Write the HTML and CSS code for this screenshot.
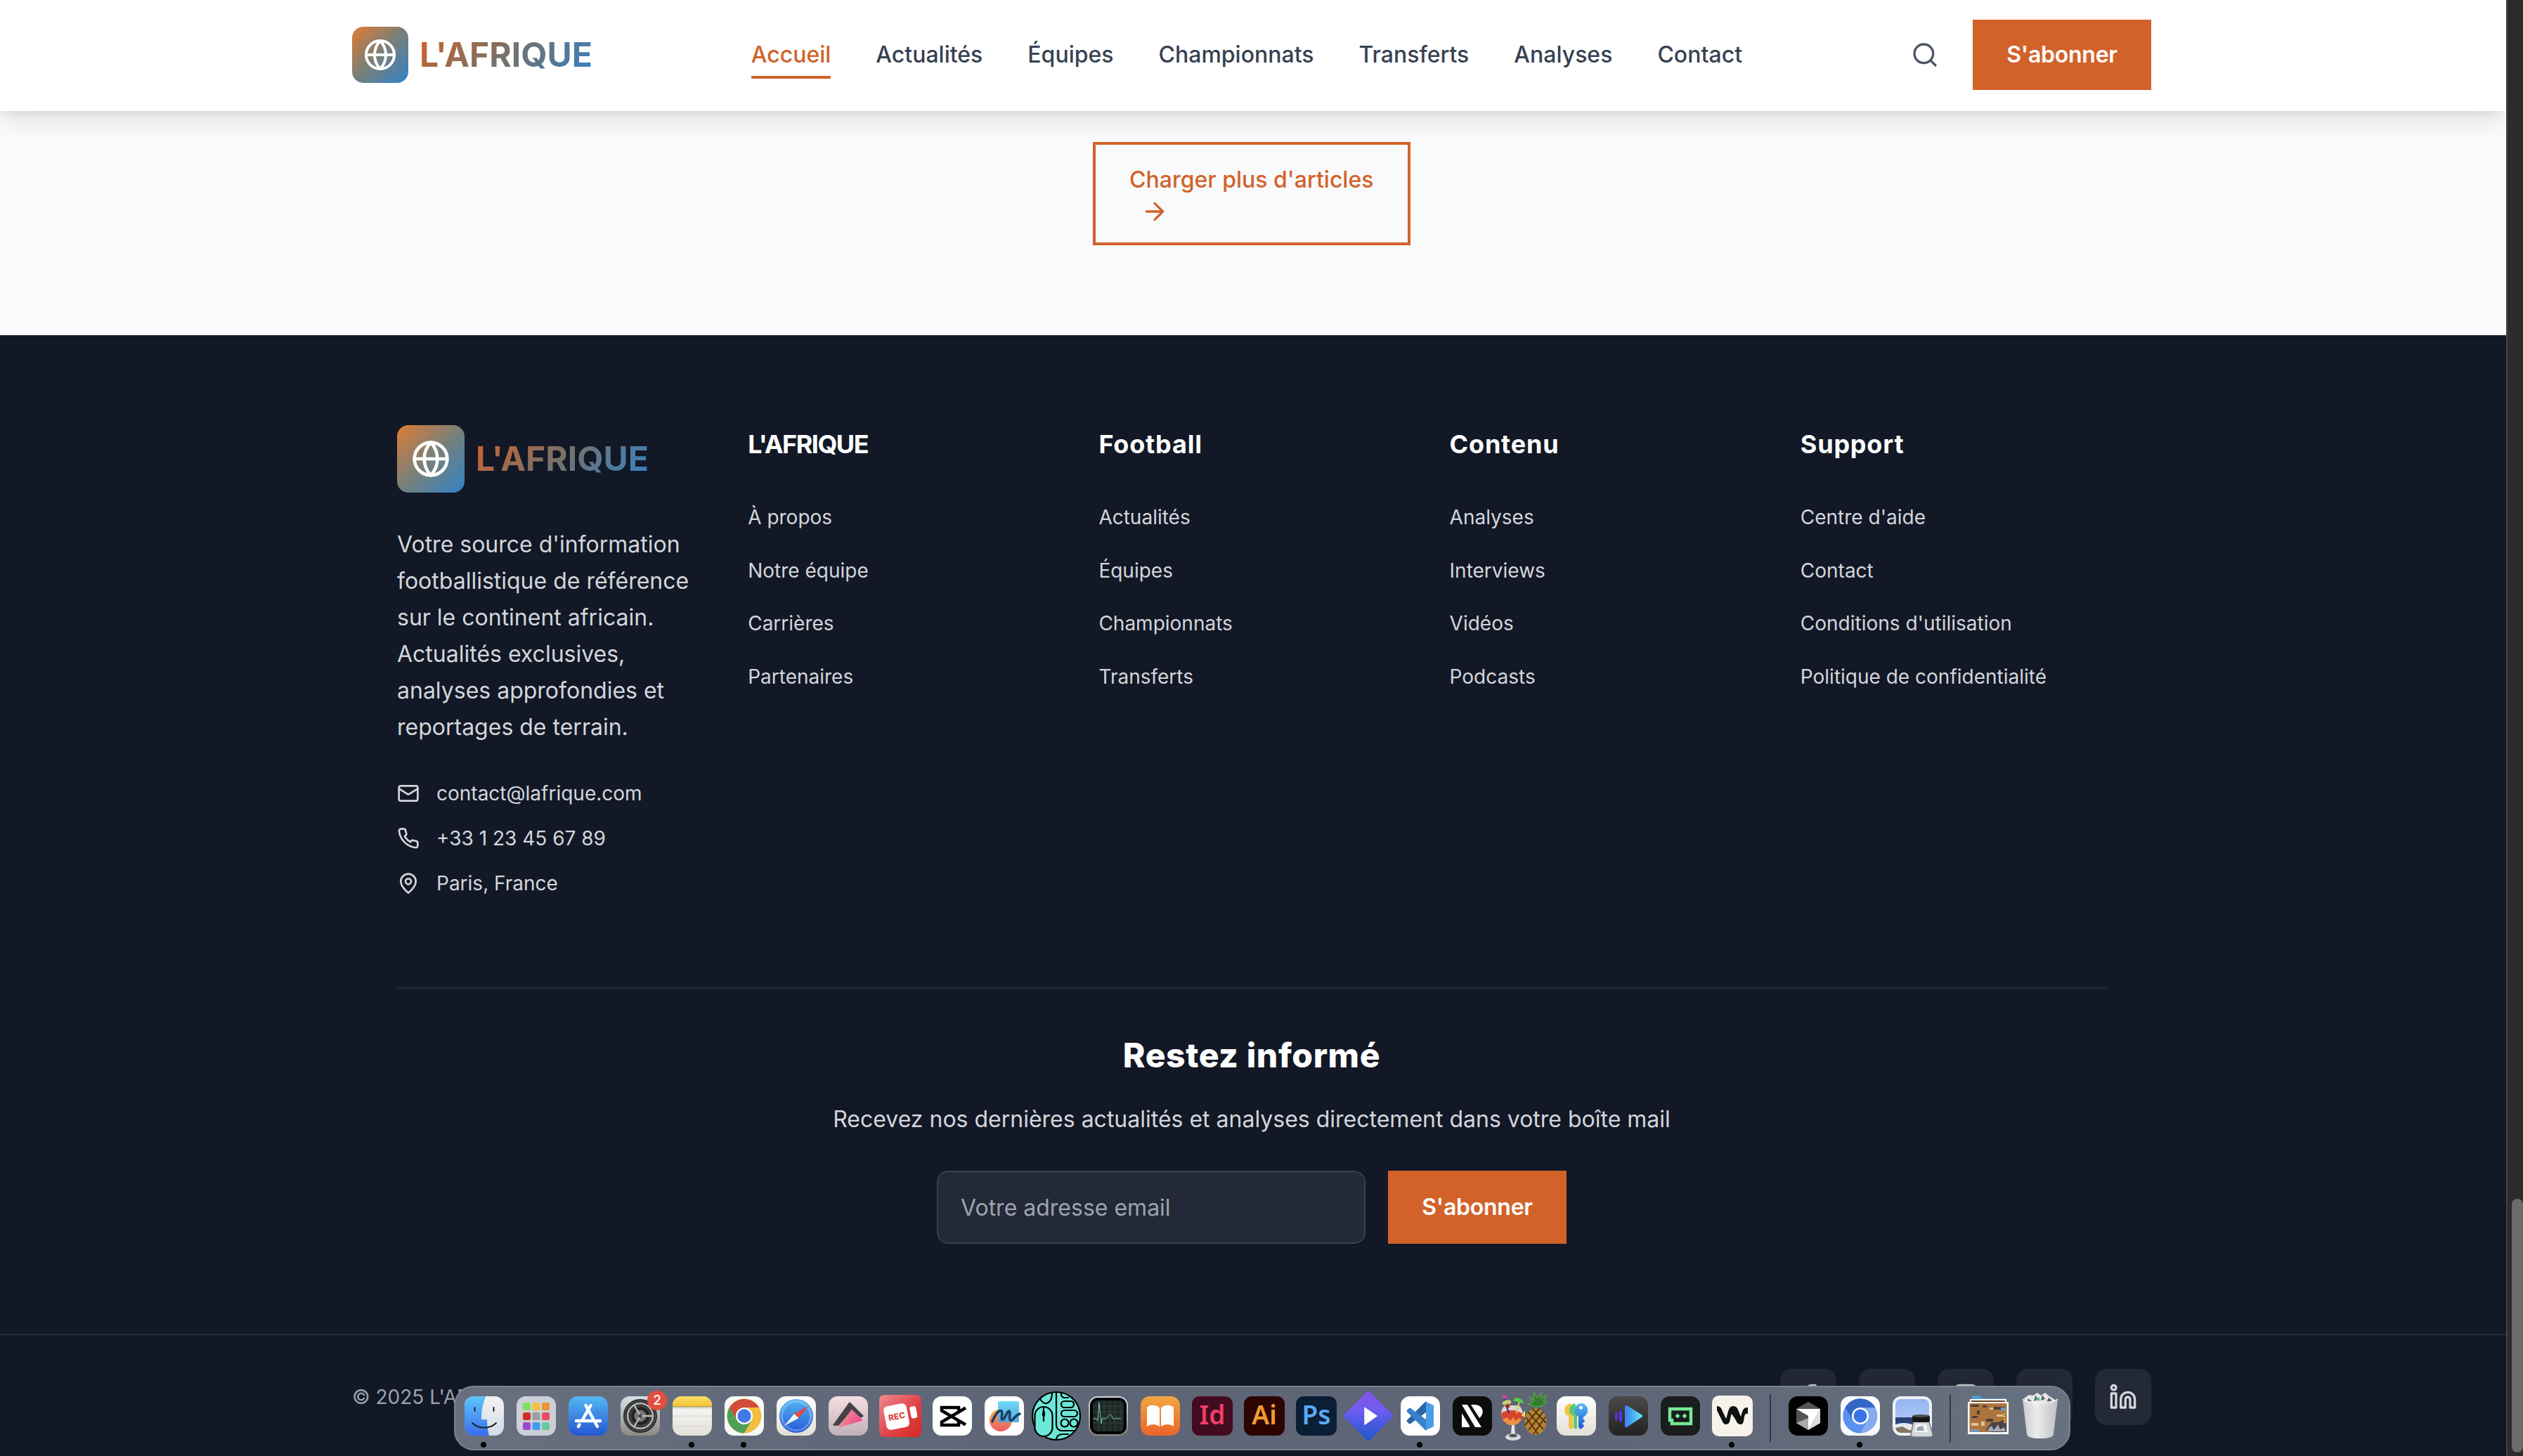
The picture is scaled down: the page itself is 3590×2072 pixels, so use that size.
FILE: index.html
```html
<!DOCTYPE html>
<html lang="fr">
<head>
<meta charset="utf-8">
<title>L'AFRIQUE</title>
<link rel="stylesheet" href="styles.css">
</head>
<body>
<div class="window">
<div class="page">
  <header class="header">
    <div class="header-inner">
      <a class="brand">
        <span class="brand-icon"><svg viewBox="0 0 24 24" width="48" height="48" class="stroke"><circle cx="12" cy="12" r="10"/><path d="M12 2a14.5 14.5 0 0 0 0 20 14.5 14.5 0 0 0 0-20M2 12h20"/></svg></span>
        <span class="brand-name">L'AFRIQUE</span>
      </a>
      <nav class="nav">
        <a class="active">Accueil</a><a>Actualités</a><a>Équipes</a><a>Championnats</a><a>Transferts</a><a>Analyses</a><a>Contact</a>
      </nav>
      <div class="actions">
        <svg viewBox="0 0 24 24" width="40" height="40" class="stroke"><circle cx="11" cy="11" r="8"/><path d="m21 21-4.3-4.3"/></svg>
        <a class="btn">S'abonner</a>
      </div>
    </div>
  </header>
  <main class="more">
    <a class="more-btn">Charger plus d'articles <svg viewBox="0 0 24 24" width="40" height="40" class="stroke"><path d="M5 12h14M12 5l7 7-7 7"/></svg></a>
  </main>
  <footer class="footer">
    <div class="footer-main">
      <div class="columns">
        <div class="about">
          <a class="brand large">
            <span class="brand-icon"><svg viewBox="0 0 24 24" width="56" height="56" class="stroke"><circle cx="12" cy="12" r="10"/><path d="M12 2a14.5 14.5 0 0 0 0 20 14.5 14.5 0 0 0 0-20M2 12h20"/></svg></span>
            <span class="brand-name">L'AFRIQUE</span>
          </a>
          <p>Votre source d'information footballistique de référence sur le continent africain. Actualités exclusives, analyses approfondies et reportages de terrain.</p>
          <ul class="contacts">
            <li><svg viewBox="0 0 24 24" width="32" height="32" class="stroke"><rect x="2" y="4" width="20" height="16" rx="2"/><path d="m22 7-8.97 5.7a1.94 1.94 0 0 1-2.06 0L2 7"/></svg>contact@lafrique.com</li>
            <li><svg viewBox="0 0 24 24" width="32" height="32" class="stroke"><path d="M22 16.92v3a2 2 0 0 1-2.18 2 19.79 19.79 0 0 1-8.63-3.07 19.5 19.5 0 0 1-6-6 19.79 19.79 0 0 1-3.07-8.67A2 2 0 0 1 4.11 2h3a2 2 0 0 1 2 1.72c.127.96.361 1.903.7 2.81a2 2 0 0 1-.45 2.11L8.09 9.91a16 16 0 0 0 6 6l1.27-1.27a2 2 0 0 1 2.11-.45c.907.339 1.85.573 2.81.7A2 2 0 0 1 22 16.92z"/></svg>+33 1 23 45 67 89</li>
            <li><svg viewBox="0 0 24 24" width="32" height="32" class="stroke"><path d="M20 10c0 4.993-5.539 10.193-7.399 11.799a1 1 0 0 1-1.202 0C9.539 20.193 4 14.993 4 10a8 8 0 0 1 16 0"/><circle cx="12" cy="10" r="3"/></svg>Paris, France</li>
          </ul>
        </div>
        <div class="links"><h3 class="caps">L'AFRIQUE</h3><ul><li>À propos</li><li>Notre équipe</li><li>Carrières</li><li>Partenaires</li></ul></div>
        <div class="links"><h3>Football</h3><ul><li>Actualités</li><li>Équipes</li><li>Championnats</li><li>Transferts</li></ul></div>
        <div class="links"><h3>Contenu</h3><ul><li>Analyses</li><li>Interviews</li><li>Vidéos</li><li>Podcasts</li></ul></div>
        <div class="links"><h3>Support</h3><ul><li>Centre d'aide</li><li>Contact</li><li>Conditions d'utilisation</li><li>Politique de confidentialité</li></ul></div>
      </div>
      <section class="newsletter">
        <h2>Restez informé</h2>
        <p>Recevez nos dernières actualités et analyses directement dans votre boîte mail</p>
        <form><input type="email" placeholder="Votre adresse email"><a class="btn">S'abonner</a></form>
      </section>
    </div>
    <div class="bottom">
      <div class="bottom-inner">
        <span>© 2025 L'AF</span>
        <div class="socials">
          <a><svg viewBox="0 0 24 24" width="40" height="40" class="stroke"><path d="M18 2h-3a5 5 0 0 0-5 5v3H7v4h3v8h4v-8h3l1-4h-4V7a1 1 0 0 1 1-1h3z"/></svg></a>
          <a></a>
          <a><svg viewBox="0 0 24 24" width="40" height="40" class="stroke"><rect x="2" y="2" width="20" height="20" rx="5"/></svg></a>
          <a></a>
          <a><svg viewBox="0 0 24 24" width="40" height="40" class="stroke"><path d="M16 8a6 6 0 0 1 6 6v7h-4v-7a2 2 0 0 0-4 0v7h-4v-7a6 6 0 0 1 6-6z"/><rect x="2" y="9" width="4" height="12"/><circle cx="4" cy="4" r="2"/></svg></a>
        </div>
      </div>
    </div>
  </footer>
</div>
<div class="scrollbar"><div class="thumb"></div></div>
</div>

<svg class="defs" width="0" height="0">
  <defs>
    <linearGradient id="blue" x2="0" y2="1"><stop stop-color="#55b8f2"/><stop offset="1" stop-color="#2456d3"/></linearGradient>
    <linearGradient id="finder" x2="0" y2="1"><stop stop-color="#5cc6f8"/><stop offset="1" stop-color="#3a6df0"/></linearGradient>
    <linearGradient id="silver" x2="0" y2="1"><stop stop-color="#f4f3f3"/><stop offset="1" stop-color="#d3dbe8"/></linearGradient>
    <linearGradient id="metal" x2="0" y2="1"><stop stop-color="#d3dfe6"/><stop offset="1" stop-color="#8e8882"/></linearGradient>
    <linearGradient id="yellow" x2="0" y2="1"><stop stop-color="#fadf6a"/><stop offset="1" stop-color="#f2c22f"/></linearGradient>
    <linearGradient id="paper" x2="0" y2="1"><stop stop-color="#fff"/><stop offset="1" stop-color="#e2dfd8"/></linearGradient>
    <linearGradient id="pink" x2="0" y2="1"><stop stop-color="#f6dfe2"/><stop offset="1" stop-color="#bfb0b8"/></linearGradient>
    <linearGradient id="coral" x2="1" y2=".4"><stop stop-color="#f39a8c"/><stop offset="1" stop-color="#ef4f93"/></linearGradient>
    <linearGradient id="red" x2="1" y2="1"><stop stop-color="#f08a90"/><stop offset=".55" stop-color="#df4448"/><stop offset="1" stop-color="#d5281f"/></linearGradient>
    <linearGradient id="orange" x2="0" y2="1"><stop stop-color="#f2a63f"/><stop offset="1" stop-color="#ea642c"/></linearGradient>
    <linearGradient id="violet" x2="0" y2="1"><stop stop-color="#8357e8"/><stop offset=".4" stop-color="#6e5cf0"/><stop offset="1" stop-color="#1d56cb"/></linearGradient>
    <linearGradient id="dark" x2="0" y2="1"><stop stop-color="#4a4a4a"/><stop offset="1" stop-color="#222"/></linearGradient>
    <linearGradient id="play" x2="1"><stop stop-color="#3f86f6"/><stop offset="1" stop-color="#5de0ee"/></linearGradient>
    <linearGradient id="sky" x2="0" y2="1"><stop stop-color="#94b6f2"/><stop offset="1" stop-color="#bcd0f6"/></linearGradient>
    <linearGradient id="sun" x2="0" y2="1"><stop stop-color="#f2b245"/><stop offset="1" stop-color="#ea5a66"/></linearGradient>
    <linearGradient id="aqua" x2="0" y2="1"><stop stop-color="#62d8fb"/><stop offset="1" stop-color="#4f9fd8"/></linearGradient>
    <linearGradient id="bin" x2="1"><stop stop-color="#cfd1d3"/><stop offset=".4" stop-color="#f1f1f2"/><stop offset="1" stop-color="#c2c4c8"/></linearGradient>
  </defs>
</svg>

<div class="dock">
  <!-- Finder -->
  <svg viewBox="-37 -43 74 92"><rect x="-28" y="-28" width="56" height="56" rx="13" fill="url(#silver)"/><path d="M2.500-28H-15a13 13 0 0 0-13 13v30a13 13 0 0 0 13 13H7C5 20 4 13 4 5H-4C-4-8-2-18 2.500-28z" fill="url(#finder)"/><path d="M-17 10C-8 19 8 19 17 10M-13.500-12v5M13.500-12v5" fill="none" stroke="#222" stroke-width="2" stroke-linecap="round"/><circle cx="-1" cy="41" r="4"/></svg>
  <!-- Launchpad -->
  <svg viewBox="-37 -43 74 92"><rect x="-28" y="-28" width="56" height="56" rx="13" fill="#ccd0d6"/><g><rect x="-19" y="-19" width="11" height="11" rx="2.500" fill="#7fe35a"/><rect x="-5.500" y="-19" width="11" height="11" rx="2.500" fill="#f2bf3f"/><rect x="8" y="-19" width="11" height="11" rx="2.500" fill="#ea9338"/><rect x="-19" y="-5" width="11" height="11" rx="2.500" fill="#cf3128"/><rect x="-5.500" y="-5" width="11" height="11" rx="2.500" fill="#9a9fa3"/><rect x="8" y="-5" width="11" height="11" rx="2.500" fill="#ea4c63"/><rect x="-19" y="9" width="11" height="11" rx="2.500" fill="#9a48d2"/><rect x="-5.500" y="9" width="11" height="11" rx="2.500" fill="#3f9cf5"/><rect x="8" y="9" width="11" height="11" rx="2.500" fill="#66ca9e"/></g></svg>
  <!-- App Store -->
  <svg viewBox="-37 -43 74 92"><rect x="-28" y="-28" width="56" height="56" rx="13" fill="url(#blue)"/><path d="M-17 7H5M12 7h5M3.500-15-9 7M-12.500 12.500-14 15M-3.500-15 13 15" fill="none" stroke="#fff" stroke-width="4.500" stroke-linecap="round"/></svg>
  <!-- Settings -->
  <svg viewBox="-37 -43 74 92"><rect x="-28" y="-28" width="56" height="56" rx="13" fill="url(#metal)"/><circle r="24" fill="#1d1d1d"/><circle r="21.500" fill="none" stroke="#777" stroke-width="2.500" stroke-dasharray="1.200 1.300"/><circle r="18" fill="#3c3c3c" stroke="#b4b6b6" stroke-width="2.500"/><circle r="10.500" fill="#777" stroke="#222" stroke-width="4"/><path d="M0 0h18M0 0l-9-16M0 0l-9 16" stroke="#bcbebe" stroke-width="2.500"/><circle r="2.500" fill="#444"/><circle cx="24" cy="-22" r="14" fill="#e24f3f"/><text x="24" y="-16" class="badge">2</text></svg>
  <!-- Notes -->
  <svg viewBox="-37 -43 74 92"><rect x="-28" y="-28" width="56" height="56" rx="13" fill="url(#paper)"/><path d="M-28-13v-2a13 13 0 0 1 13-13h30a13 13 0 0 1 13 13v2z" fill="url(#yellow)"/><path d="M-28-13h56" stroke="#8d8468"/><path d="M-27-11h54" stroke="#bbb" stroke-width="2" stroke-dasharray="1 1.500"/><path d="M-28 0h56M-28 14.500h56" stroke="#d4d4d8"/><circle cx="-1" cy="41" r="4"/></svg>
  <!-- Chrome -->
  <svg viewBox="-37 -43 74 92"><rect x="-28" y="-28" width="56" height="56" rx="13" fill="#f8f8f8"/><circle r="24.500" fill="#f3bf42"/><path d="M-21.200-12A24.500 24.500 0 0 0 0 24.500L10.500 6 0 0z" fill="#4fa056"/><path d="M-21-12A24.500 24.500 0 0 1 21.200-12H0L-10 6z" fill="#d44c3c"/><circle r="12" fill="#fff"/><circle r="9.700" fill="#4379e6"/><circle cx="-1" cy="41" r="4"/></svg>
  <!-- Safari -->
  <svg viewBox="-37 -43 74 92"><rect x="-28" y="-28" width="56" height="56" rx="13" fill="url(#paper)"/><circle r="24" fill="url(#blue)"/><circle r="20.500" fill="none" stroke="#cfe6fb" stroke-width="3" stroke-dasharray=".7 1.450"/><path d="M17.500-14 3.500 3-3-3z" fill="#e8473d"/><path d="M-17 14-3-3 3.500 3z" fill="#f1f4f6"/></svg>
  <!-- Pyramid player -->
  <svg viewBox="-37 -43 74 92"><rect x="-28" y="-28" width="56" height="56" rx="13" fill="url(#pink)"/><path d="M2-19 21 0l-3 2L5-9-14 13h-7z" fill="#454347" stroke="#454347" stroke-width="1.500" stroke-linejoin="round"/><path d="M5-8 19 6-12 15z" fill="url(#coral)" stroke="url(#coral)" stroke-width="2" stroke-linejoin="round"/></svg>
  <!-- Recorder -->
  <svg viewBox="-37 -43 74 92"><rect x="-30" y="-30" width="60" height="60" rx="7" fill="url(#red)"/><g transform="rotate(-11)"><rect x="-22" y="-17" width="33" height="34" rx="6" fill="#fff"/><rect x="15" y="-10" width="9" height="17" rx="3" fill="#fff"/><text x="-5" y="4" class="rec">REC</text></g></svg>
  <!-- CapCut -->
  <svg viewBox="-37 -43 74 92"><rect x="-28" y="-28" width="56" height="56" rx="13" fill="#fff"/><path d="M19-11.500-15 8.500v4.500h24V8M19 12.500-15-7.500V-12h24v4" fill="none" stroke="#000" stroke-width="4.500"/></svg>
  <!-- Freeform -->
  <svg viewBox="-37 -43 74 92"><rect x="-28" y="-28" width="56" height="56" rx="13" fill="#fff"/><circle cx="-5" cy="6" r="16" fill="url(#sun)"/><rect x="-9" y="-21" width="30" height="30" rx="2" fill="url(#aqua)" opacity=".94"/><path d="M-17 8C-12-4-7-9-4-7-1-5-6 4-3 5 1 6 4-8 7-7 10-5 5 4 9 6c3 2 6-7 13-9" fill="none" stroke="#173f66" stroke-width="3.500" stroke-linecap="round"/></svg>
  <!-- Mouse utility -->
  <svg viewBox="-37 -43 74 92"><g fill="#6be8d8" stroke="#000" stroke-width="2.200"><circle r="34"/><rect x="-30.500" y="-13" width="25" height="42" rx="12.500"/><path d="M0-34V12q0 9 9 9H27M-23-24C-16-13-6-18-6-33M0 33q1-7 9-7h9M7-33v3q1 4 5 4h6" fill="none"/><rect x="7" y="-21" width="18" height="9" rx="4.500"/><rect x="7" y="-8" width="23" height="9" rx="4.500"/><circle cx="12" cy="10" r="5.500"/><circle cx="25" cy="10" r="5.500"/><path d="M-18-13V8"/></g><rect x="-20" y="-7" width="4" height="8" rx="2"/></svg>
  <!-- Activity monitor -->
  <svg viewBox="-37 -43 74 92"><rect x="-28" y="-28" width="56" height="56" rx="13" fill="url(#metal)"/><rect x="-26" y="-26" width="52" height="52" rx="11"/><rect x="-22" y="-22" width="44" height="44" rx="6" fill="#1d2827"/><path d="M-14-22v44M-6-22v44M2-22v44M10-22v44M18-22v44M-22-14h44M-22-6h44M-22 2h44M-22 10h44" stroke="#3b4a48" stroke-width=".8"/><path d="M-22 4h5l2 3 2-26 3 30 1-7h5c4 0 5-11 9-4 3 9 5 1 8 4h5" fill="none" stroke="#7cc4ae" stroke-width="1"/></svg>
  <!-- Books -->
  <svg viewBox="-37 -43 74 92"><rect x="-28" y="-28" width="56" height="56" rx="13" fill="url(#orange)"/><path d="M-1-11c-3-5-14-6-18-1v27c5-4 13-4 18 0zM1-11c3-5 14-6 18-1v27c-5-4-13-4-18 0z" fill="#fff"/></svg>
  <!-- Adobe -->
  <svg viewBox="-37 -43 74 92"><rect x="-29" y="-28" width="58" height="56" rx="11" fill="#430b20"/><text y="12" class="adobe" fill="#ee3f66">Id</text></svg>
  <svg viewBox="-37 -43 74 92"><rect x="-29" y="-28" width="58" height="56" rx="11" fill="#2c0501"/><text y="12" class="adobe" fill="#f19b33">Ai</text></svg>
  <svg viewBox="-37 -43 74 92"><rect x="-29" y="-28" width="58" height="56" rx="11" fill="#0a1e34"/><text y="12" class="adobe" fill="#58aaf7">Ps</text></svg>
  <!-- Diamond player -->
  <svg viewBox="-37 -43 74 92"><path d="M-3-33.500q3-3 6 0L33.500-3q3 3 0 6L3 33.500q-3 3-6 0L-33.500 3q-3-3 0-6z" fill="url(#violet)"/><path d="M-5-11.500 12 0-5 12z" fill="#fff" stroke="#fff" stroke-width="1.500" stroke-linejoin="round"/></svg>
  <!-- VS Code -->
  <svg viewBox="-37 -43 74 92"><rect x="-28" y="-28" width="56" height="56" rx="13" fill="#fff"/><path d="m-18 7 26-26v12L-15 10z" fill="#2a67a8" stroke="#2a67a8" stroke-width="3" stroke-linejoin="round"/><path d="m-18-7 26 26V7L-15-10z" fill="#3a80c8" stroke="#3a80c8" stroke-width="3" stroke-linejoin="round"/><path d="m8-20 11 5v30L8 20z" fill="#4a9de8"/><circle cx="-1" cy="41" r="4"/></svg>
  <!-- Raylight -->
  <svg viewBox="-37 -43 74 92"><rect x="-28" y="-28" width="56" height="56" rx="13" fill="#0c0c0c"/><path d="M-15-16h8L13 16H4zM-15-4-4 14v2h-11zM-2-16h5C16-16 18-3 10 3z" fill="#fff"/></svg>
  <!-- Cocktail and pineapple -->
  <svg viewBox="-37 -43 74 92"><path d="M16-13 5-17l6-2-3-8 6 5-1-12 6 8 5-7v8l8-5-5 9 5 1-7 6z" fill="#347c30" stroke="#58a046" stroke-width="1.500"/><ellipse cx="16" cy="8" rx="15.500" ry="19" fill="#b68332"/><path d="m2 2 18 24M5-6l22 25M11-11l20 21M30 1 13 26M27-6 6 20M22-11 1 13" stroke="#56370f" stroke-width="2"/><path d="M-33-3c0-6 3-11 7-12h18c4 3 7 9 5 15-2 9-8 13-14 13S-32 8-33-3z" fill="#d9d5d2"/><path d="M-33-4q15-9 31 1c1 17-29 23-31-1z" fill="#d9452c"/><path d="M-31 5q3 5 10 8 12 1 17-8l-4-2-4 4-4-5-4 5-5-5z" fill="#f09142"/><path d="M-18 13h4l1 15h-6z" fill="#e4e5e8"/><ellipse cx="-16" cy="30" rx="11" ry="5" fill="#d6d8dc"/><ellipse cx="-16" cy="28" rx="6" ry="2.500" fill="#555"/><path d="m-29-25 7 21" stroke="#2e2a8e" stroke-width="2"/><path d="m-7-21-4 17" stroke="#d5cd4c" stroke-width="2"/><circle cx="-28" cy="-27" r="3" fill="#dd3ca0"/><ellipse cx="-25" cy="-19" rx="6.500" ry="3.500" fill="#c6cf70" transform="rotate(-12 -25 -19)"/><circle cx="-24" cy="-14" r="3" fill="#a5232f"/><path d="M-16-22c3-7 14-3 15 4l-6-1z" fill="#59cc45"/><path d="m1-8-5 7 5 3z" fill="#f7e35c"/></svg>
  <!-- Passwords -->
  <svg viewBox="-37 -43 74 92"><rect x="-28" y="-28" width="56" height="56" rx="13" fill="url(#paper)"/><path d="M-8-18q-9 2-9 10 0 6 6 8v16l3 3 3-2V-7z" fill="#f2c446"/><path d="M-2-18q-8 2-8 10 0 6 6 8v16l3 3 2-2V-6z" fill="#5cc974"/><path d="M7-18a10 10 0 0 0-4 19v15l3.500 3 5-5-3-3 4-4-3-3 1-3a10 10 0 0 0-3.500-19z" fill="url(#blue)"/><circle cx="6.500" cy="-12" r="2.500" fill="#fff"/></svg>
  <!-- Clip player -->
  <svg viewBox="-37 -43 74 92"><rect x="-28" y="-28" width="56" height="56" rx="13" fill="url(#dark)"/><path d="M-3-13 18 0-3 14z" fill="url(#play)" stroke="url(#play)" stroke-width="4" stroke-linejoin="round"/><path d="M-17-4v9" stroke="#6c2bd6" stroke-width="3.500" stroke-linecap="round"/><path d="M-11-5.500v12" stroke="#4c3cf0" stroke-width="4" stroke-linecap="round"/></svg>
  <!-- Pixel bot -->
  <svg viewBox="-37 -43 74 92"><rect x="-28" y="-28" width="56" height="56" rx="13" fill="#1a1c1d"/><path d="M-15-10h30v21h-27V6h-3z" fill="none" stroke="#75ea94" stroke-width="4.500"/><path d="m-4-3.500 3.500 3.500L-4 3.500-7.500 0zM6-3.500 9.500 0 6 3.500 2.500 0z" fill="#75ea94"/></svg>
  <!-- Wave -->
  <svg viewBox="-37 -43 74 92"><rect x="-29" y="-29" width="58" height="58" rx="10" fill="#f7f2ea"/><path d="M-22-14q5 0 7 5L-9 4C-6-3-6-14 1-14q5 0 7 5l4 10c2-5 2-14 10-13v9q-4-1-5 4c-1 6-1 11-5 11q-5 0-7-6L-1-3c-3 6-1 15-8 15q-4 0-6-6l-7-14z" fill="#0d1110"/><circle cx="-1" cy="41" r="4"/></svg>
  <i class="separator"></i>
  <!-- Cursor -->
  <svg viewBox="-37 -43 74 92"><rect x="-28" y="-28" width="56" height="56" rx="13"/><path d="M0-20 17-10v20L0 20-17 10v-20z" fill="#777"/><path d="M0-20-17-10H17z" fill="#555"/><path d="M-17-10H17L0 20V0z" fill="#fff"/><path d="M-17-10 0 0v3L-17 10z" fill="#555"/><path d="M-17 10 0 3v17z" fill="#aaa"/><path d="M17-10 0 20 17 10z" fill="#ddd"/></svg>
  <!-- Chromium -->
  <svg viewBox="-37 -43 74 92"><rect x="-28" y="-28" width="56" height="56" rx="13" fill="#fafbfc"/><circle r="24.500" fill="#84abf0"/><path d="M-21.500-12A24.500 24.500 0 0 0 0 24.500L10.500 6 0 0z" fill="#5b91ee"/><path d="M-21.500-12A24.500 24.500 0 0 1 21.500-12H0L-10 7z" fill="#3568c6"/><circle r="12" fill="#fff"/><circle r="9.500" fill="#3874e6"/><circle cx="-1" cy="41" r="4"/></svg>
  <!-- Preview -->
  <svg viewBox="-37 -43 74 92"><rect x="-28" y="-28" width="56" height="56" rx="12" fill="#f0f1f4"/><rect x="-24" y="-24" width="48" height="48" rx="8" fill="url(#sky)"/><path d="M-24 2h48v12h-48z" fill="#2a4273"/><path d="M-24 12q12-4 24 0t24-1v5a8 8 0 0 1-8 8h-32a8 8 0 0 1-8-8z" fill="#e5e8ec"/><path d="m-24 17 10-2 9 5 9 1-2 3h-18a8 8 0 0 1-8-7z" fill="#807568"/><path d="m2 7-4 19q0 4 5 4h21q6 0 5-5L23 6z" fill="#d3d8dd" stroke="#75787c" stroke-width="1.500"/><path d="M5 12h15l2 11H3z" fill="#f5f6f7"/><path d="m7 16 8-2 2 7H6z" fill="#96a2ad"/><rect y="-1" width="25" height="10" rx="3" fill="#161616"/><ellipse cx="12.500" cy="0" rx="12" ry="2" fill="#4c4c4c"/></svg>
  <i class="separator"></i>
  <!-- Image stack -->
  <svg viewBox="-37 -43 74 92"><path d="M-23-20v-6q0-3 3-3h8l4 4h34v6z" fill="#4e9cd6"/><path d="M-26-24h52v5h-52z" fill="#fff"/><path d="M-24-22h48v2h-48z" fill="#6a4026"/><path d="M-29-20h58v46h-58z" fill="#fff"/><path d="M-26.500-18h53v41h-53z" fill="#ad743e"/><path d="M-25-16h12v3h-12zm17 1h6v3h-6zM8-13h16v4H8zM-23 0h8v3h-8zm20 4H7v4H-3zM-16-8h4v6h-4z" fill="#4c4039"/><path d="M2-12h5v3H2zM-10 8h5v6h-5zM-24 10h10v4h-10zM12-2h10v3H12z" fill="#dfc197"/><path d="M5 9h10l6-3 5 5v12H2l-5-4z" fill="#49404a"/><path d="m0 18 5-4 3 6 6-8 3 7 6-3 2 6H0z" fill="#a9abb3"/><path d="M18-12h7v5h-7zM-25 19h12v4h-12z" fill="#6d9abf"/><path d="M23-4v14" stroke="#edc935" stroke-width="2" stroke-dasharray="2 2"/></svg>
  <!-- Bin -->
  <svg viewBox="-37 -43 74 92"><path d="m-23-25 7-5 6 1 6-4 5 4 6-4 6 5 8 5-2 8h-38z" fill="#e6e6e8"/><path d="m-18-25 6 4-5 3zM-7-29l5 5-7 3zM3-30l4 6-6 2zM12-26l5 4-8 3z" fill="#625c5b"/><path d="m-8-25 8-1-2 5z" fill="#4ab7a2"/><path d="M-25-24q5 5 25 5t25-5l-6 50q-1 6-19 6t-19-6z" fill="url(#bin)" opacity=".96"/><path d="M-25-24q5 5 25 5t25-5" fill="none" stroke="#f4f4f5" stroke-width="1.500"/></svg>
</div>
</body>
</html>
```
FILE: styles.css
```css
* { box-sizing: border-box; margin: 0; padding: 0; }
body { width: 3590px; height: 2072px; overflow: hidden; font-family: Inter, "Liberation Sans", sans-serif; font-size: 32px; line-height: 1.6; background: #2c2c2c; }
ul { list-style: none; }
.stroke { fill: none; stroke: currentColor; stroke-width: 2; stroke-linecap: round; stroke-linejoin: round; flex: none; }
.window { display: flex; height: 2072px; }
.page { width: 3566px; height: 2072px; overflow: hidden; background: #f9fafb; display: flex; flex-direction: column; }
.scrollbar { flex: 1; background: #2c2c2c; border-left: 2px solid #434344; padding: 1706px 0 5px 6px; }
.thumb { height: 361px; border-radius: 8px; background: #6b6b6b; }

.header { position: relative; z-index: 2; height: 158px; flex: none; margin-left: -4px; padding-left: 505px; background: #fff; box-shadow: 0 20px 30px -6px rgba(0,0,0,.1), 0 8px 12px -8px rgba(0,0,0,.1); }
.header-inner { width: 2560px; height: 156px; display: flex; align-items: center; justify-content: space-between; }
.brand { display: flex; align-items: center; gap: 16px; }
.brand-icon { width: 80px; height: 80px; border-radius: 16px; display: flex; align-items: center; justify-content: center; color: #fff; background: linear-gradient(135deg, #e07b33, #77807a 50%, #3182c8); }
.brand-name { font-size: 48px; font-weight: 700; line-height: 64px; background: linear-gradient(135deg, #d2622a, #75716b 50%, #3182c8); -webkit-background-clip: text; background-clip: text; color: transparent; }
.large .brand-icon { width: 96px; height: 96px; }
.nav { display: flex; gap: 64px; margin-right: 14px; font-weight: 500; color: #374151; }
.nav a { position: relative; }
.nav .active { color: #d2622a; }
.nav .active::after { content: ""; position: absolute; left: 0; right: 0; bottom: -8px; height: 4px; border-radius: 1px; background: #d2622a; }
.actions { display: flex; align-items: center; gap: 48px; color: #4b5563; }
.btn { width: 254px; height: 100px; display: flex; align-items: center; justify-content: center; background: #d2622a; color: #fff; font-weight: 600; letter-spacing: -.25px; }

.more { height: 319px; flex: none; padding: 44px 0 0 1555px; }
.more-btn { display: block; width: 452px; height: 147px; border: 4px solid #d2622a; padding: 27px 44px 0 48px; color: #d2622a; font-weight: 500; line-height: 45px; }
.more-btn svg { display: block; margin: 3px 0 0 16px; }

.footer { flex: 1; background: #121826; color: #d3d6db; }
.footer-main { width: 2432px; margin-left: 565px; padding: 128px 0; height: 1421px; }
.columns { display: grid; grid-template-columns: repeat(5, 1fr); gap: 64px; height: 800px; }
.about p { margin-top: 48px; line-height: 52px; }
.contacts { margin-top: 48px; display: flex; flex-direction: column; gap: 24px; font-size: 28px; line-height: 40px; }
.contacts li { display: flex; align-items: center; gap: 24px; }
.links h3 { font-size: 36px; font-weight: 700; line-height: 54px; letter-spacing: .8px; color: #fff; margin-bottom: 52px; }
.links .caps { letter-spacing: -1.500px; }
.links ul { display: flex; flex-direction: column; gap: 24px; font-size: 28px; line-height: 51.500px; white-space: nowrap; }
.newsletter { border-top: 2px solid #232936; padding-top: 63px; text-align: center; }
.newsletter h2 { font-size: 48px; font-weight: 800; line-height: 64px; letter-spacing: .6px; color: #fff; }
.newsletter p { margin-top: 33px; line-height: 51px; }
.newsletter form { margin-top: 48px; display: flex; justify-content: center; gap: 32px; }
.newsletter input { width: 610px; height: 104px; border: 2px solid #3a404d; border-radius: 16px; background: #232936; padding: 0 32px; font: inherit; color: #fff; }
.newsletter input::placeholder { color: #9ca3af; opacity: 1; }
.newsletter .btn { height: 104px; }
.bottom { border-top: 2px solid #232936; padding-top: 48px; }
.bottom-inner { width: 2560px; margin-left: 501px; display: flex; align-items: center; justify-content: space-between; font-size: 28px; color: #9ca3af; }
.socials { display: flex; gap: 32px; color: #d3d6db; }
.socials a { width: 80px; height: 80px; border-radius: 16px; background: #232936; display: flex; align-items: center; justify-content: center; }

.defs { position: absolute; }
.dock { position: absolute; z-index: 5; left: 646px; top: 1972px; width: 2300px; height: 92px; display: flex; padding: 0 4px; border-radius: 28px; border: 2px solid #7a828e; background: linear-gradient(90deg, #68707f, #5d6576 35%, #5d6576 70%, #68717f); box-shadow: 0 0 24px rgba(0,0,0,.2); }
.dock svg { width: 74px; height: 92px; margin-top: -2px; flex: none; overflow: visible; }
.separator { width: 34px; flex: none; padding: 10px 16px; }
.separator::before { content: ""; display: block; width: 2px; height: 68px; background: #2e3747; }
.badge { font: 500 19px Inter, sans-serif; fill: #fff; text-anchor: middle; }
.rec { font: 800 12px Inter, sans-serif; fill: #de4444; text-anchor: middle; }
.adobe { font: 600 37px "Noto Sans", sans-serif; text-anchor: middle; }
```
